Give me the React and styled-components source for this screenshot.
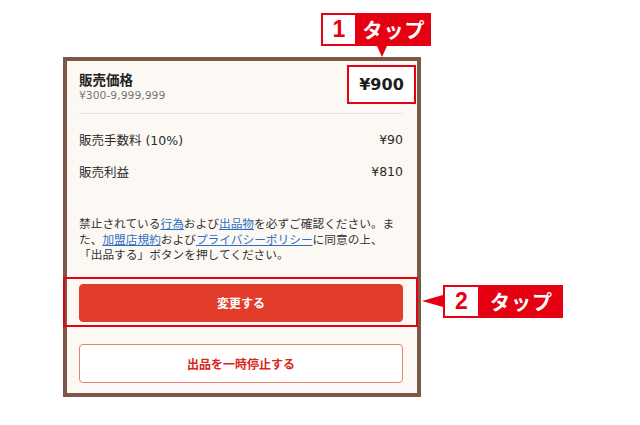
import React from "react";
import styled, { createGlobalStyle } from "styled-components";

const GlobalStyle = createGlobalStyle`
  body {
    margin: 0;
    background: #ffffff;
    font-family: "DejaVu Sans", "Noto Sans CJK JP", sans-serif;
    color: #222222;
  }
`;

const Page = styled.div`
  width: 640px;
  height: 425px;
  padding: 57px 0 0 63px;
  box-sizing: border-box;
`;

const Frame = styled.div`
  position: relative;
  width: 358px;
  height: 340px;
  box-sizing: border-box;
  border: 4px solid #7b5848;
  background: #fcf9f5;
  padding: 0 14px 0 12px;
  display: flex;
  flex-direction: column;
`;

const Header = styled.div`
  height: 52px;
  display: flex;
  align-items: center;
  justify-content: space-between;
  border-bottom: 1px solid #ebe5df;
`;

const TitleBlock = styled.div`
  display: flex;
  flex-direction: column;
  gap: 2px;
`;

const Title = styled.div`
  font-family: "Noto Sans CJK JP", sans-serif;
  font-size: 13.5px;
  font-weight: 700;
  line-height: 16px;
`;

const Sub = styled.div`
  font-size: 10.8px;
  line-height: 14px;
  color: #777777;
`;

const Price = styled.div`
  font-size: 16px;
  font-weight: 700;
  color: #1d1d1d;
`;

const Rows = styled.div`
  padding-top: 9px;
  display: flex;
  flex-direction: column;
`;

const Row = styled.div`
  height: 32px;
  display: flex;
  align-items: center;
  justify-content: space-between;
  font-size: 12.5px;
  color: #2a2a2a;
`;

const Notice = styled.p`
  margin: 28px 0 0;
  font-family: "Noto Sans CJK JP", sans-serif;
  font-size: 11.7px;
  line-height: 15.5px;
  color: #333333;
  white-space: nowrap;
`;

const Link = styled.a`
  color: #2f6fbf;
  text-decoration: underline;
`;

const Button = styled.button`
  display: block;
  width: 100%;
  height: ${(p) => (p.$outline ? "39px" : "38px")};
  margin-top: 22px;
  border-radius: 4px;
  border: 1px solid ${(p) => (p.$outline ? "#e8826f" : "#e23d2a")};
  background: ${(p) => (p.$outline ? "#ffffff" : "#e23d2a")};
  color: ${(p) => (p.$outline ? "#d9261a" : "#ffffff")};
  font-family: "Noto Sans CJK JP", sans-serif;
  font-size: 12px;
  font-weight: 700;
  cursor: pointer;
`;

/* red outlines drawn over the tapped parts */
const Highlight = styled.div`
  position: absolute;
  left: ${(p) => p.$left}px;
  top: ${(p) => p.$top}px;
  width: ${(p) => p.$w}px;
  height: ${(p) => p.$h}px;
  box-sizing: border-box;
  border: 2px solid #e50012;
  background: ${(p) => (p.$fill ? "#ffffff" : "transparent")};
  display: flex;
  align-items: center;
  justify-content: center;
  pointer-events: none;
`;

const Callout = styled.div`
  position: absolute;
  left: ${(p) => p.$left}px;
  top: ${(p) => p.$top}px;
  height: 33px;
  display: flex;

  &::after {
    content: "";
    position: absolute;
    ${(p) =>
      p.$point === "down"
        ? `
      left: 56px;
      top: 33px;
      border-left: 5px solid transparent;
      border-right: 5px solid transparent;
      border-top: 11px solid #e50012;
    `
        : `
      left: -21px;
      top: 10px;
      border-top: 6px solid transparent;
      border-bottom: 6px solid transparent;
      border-right: 21px solid #e50012;
    `}
  }
`;

const Num = styled.div`
  width: ${(p) => p.$w}px;
  box-sizing: border-box;
  border: 2px solid #e50012;
  background: #ffffff;
  color: #e50012;
  font-family: "Liberation Sans", Arial, sans-serif;
  font-size: 23px;
  font-weight: 700;
  display: flex;
  align-items: center;
  justify-content: center;
`;

const Label = styled.div`
  width: ${(p) => p.$w}px;
  background: #e50012;
  color: #ffffff;
  font-family: "Noto Sans CJK JP", sans-serif;
  font-size: 20px;
  font-weight: 700;
  display: flex;
  align-items: center;
  justify-content: center;
  letter-spacing: 1px;
`;

export default function App() {
  return (
    <Page>
      <GlobalStyle />
      <Frame>
        <Header>
          <TitleBlock>
            <Title>販売価格</Title>
            <Sub>¥300-9,999,999</Sub>
          </TitleBlock>
        </Header>
        <Rows>
          <Row>
            <span>販売手数料 (10%)</span>
            <span>¥90</span>
          </Row>
          <Row>
            <span>販売利益</span>
            <span>¥810</span>
          </Row>
        </Rows>
        <Notice>
          禁止されている<Link>行為</Link>および<Link>出品物</Link>を必ずご確認ください。ま
          <br />
          た、<Link>加盟店規約</Link>および<Link>プライバシーポリシー</Link>に同意の上、
          <br />
          「出品する」ボタンを押してください。
        </Notice>
        <Button>変更する</Button>
        <Button $outline>出品を一時停止する</Button>

        <Highlight $left={280} $top={4} $w={69} $h={39} $fill>
          <Price>¥900</Price>
        </Highlight>
        <Highlight $left={-4} $top={216} $w={355} $h={50} />

        <Callout $left={254} $top={-48} $point="down">
          <Num $w={36}>1</Num>
          <Label $w={74}>タップ</Label>
        </Callout>
        <Callout $left={376} $top={224} $point="left">
          <Num $w={37}>2</Num>
          <Label $w={83}>タップ</Label>
        </Callout>
      </Frame>
    </Page>
  );
}
